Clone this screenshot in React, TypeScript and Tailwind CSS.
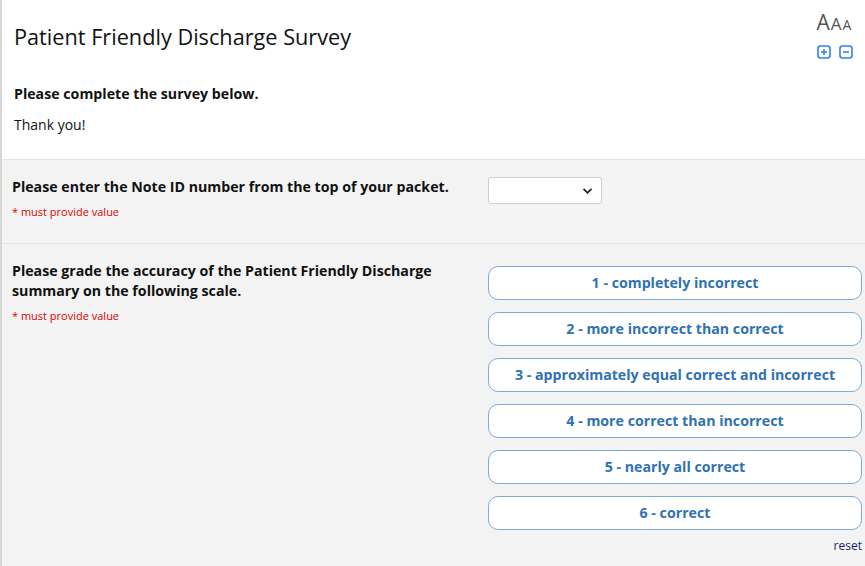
import React from "react";

const options = [
  "1 - completely incorrect",
  "2 - more incorrect than correct",
  "3 - approximately equal correct and incorrect",
  "4 - more correct than incorrect",
  "5 - nearly all correct",
  "6 - correct",
];

function BoxIcon({ minus }: { minus?: boolean }) {
  return (
    <svg width="14" height="14" viewBox="0 0 14 14">
      <rect x="1" y="1" width="12" height="12" rx="2.5" fill="none" stroke="#2f80f0" strokeWidth="1.6" />
      <line x1="4" y1="7" x2="10" y2="7" stroke="#2f80f0" strokeWidth="1.6" />
      {!minus && <line x1="7" y1="4" x2="7" y2="10" stroke="#2f80f0" strokeWidth="1.6" />}
    </svg>
  );
}

export default function App() {
  return (
    <div className="w-[865px] h-[566px] overflow-hidden border-l-2 border-[#d6d6d6] bg-[#f3f3f3] font-['Open_Sans',sans-serif] text-[#111]">
      <div className="h-[160px] bg-white border-b border-[#e3e3e3] flex justify-between">
        <div className="pl-[12px] pr-[10px]">
          <h1 className="pt-[21px] text-[21.7px] leading-[32px] text-[#111]">Patient Friendly Discharge Survey</h1>
          <p className="mt-[31px] text-[14.2px] leading-[20px] font-bold">Please complete the survey below.</p>
          <p className="mt-[11px] text-[14px] leading-[20px]">Thank you!</p>
        </div>
        <div className="flex flex-col items-center pt-[9px] pr-[12px]">
          <div className="flex items-baseline text-[#555] leading-[26px]">
            <span className="text-[21px]">A</span>
            <span className="text-[17px] ml-[1px]">A</span>
            <span className="text-[14px] ml-[1px]">A</span>
          </div>
          <div className="flex gap-[8px] mt-[7px] ml-[2px]">
            <BoxIcon />
            <BoxIcon minus />
          </div>
        </div>
      </div>

      <div className="h-[84px] border-b border-[#e3e3e3] flex pl-[10px] pt-[17px]">
        <div className="w-[476px]">
          <p className="text-[14.2px] leading-[20px] font-bold">Please enter the Note ID number from the top of your packet.</p>
          <p className="mt-[7px] text-[11px] leading-[15px] text-[#e00000]">* must provide value</p>
        </div>
        <div className="w-[114px] h-[27px] bg-white border border-[#cfcfcf] rounded-[3px] flex items-center justify-end pr-[8px]">
          <svg width="11" height="8" viewBox="0 0 11 8">
            <path d="M1.5 1.8 L5.5 5.8 L9.5 1.8" fill="none" stroke="#222" strokeWidth="1.8" />
          </svg>
        </div>
      </div>

      <div className="flex pl-[10px] pt-[17px]">
        <div className="w-[476px] pr-[30px]">
          <p className="text-[14.2px] leading-[20px] font-bold">
            Please grade the accuracy of the Patient Friendly Discharge summary on the following scale.
          </p>
          <p className="mt-[7px] text-[11px] leading-[15px] text-[#e00000]">* must provide value</p>
        </div>
        <div className="w-[374px] pt-[5px] flex flex-col">
          <div className="flex flex-col gap-[12px]">
            {options.map((o) => (
              <div
                key={o}
                className="h-[34px] bg-white border-[1.5px] border-[#7eaad8] rounded-[10px] flex items-center justify-center text-[14.2px] font-bold text-[#2f72b3]"
              >
                {o}
              </div>
            ))}
          </div>
          <div className="mt-[8px] text-right text-[12px] leading-[16px] text-[#22226b]">reset</div>
        </div>
      </div>
    </div>
  );
}
